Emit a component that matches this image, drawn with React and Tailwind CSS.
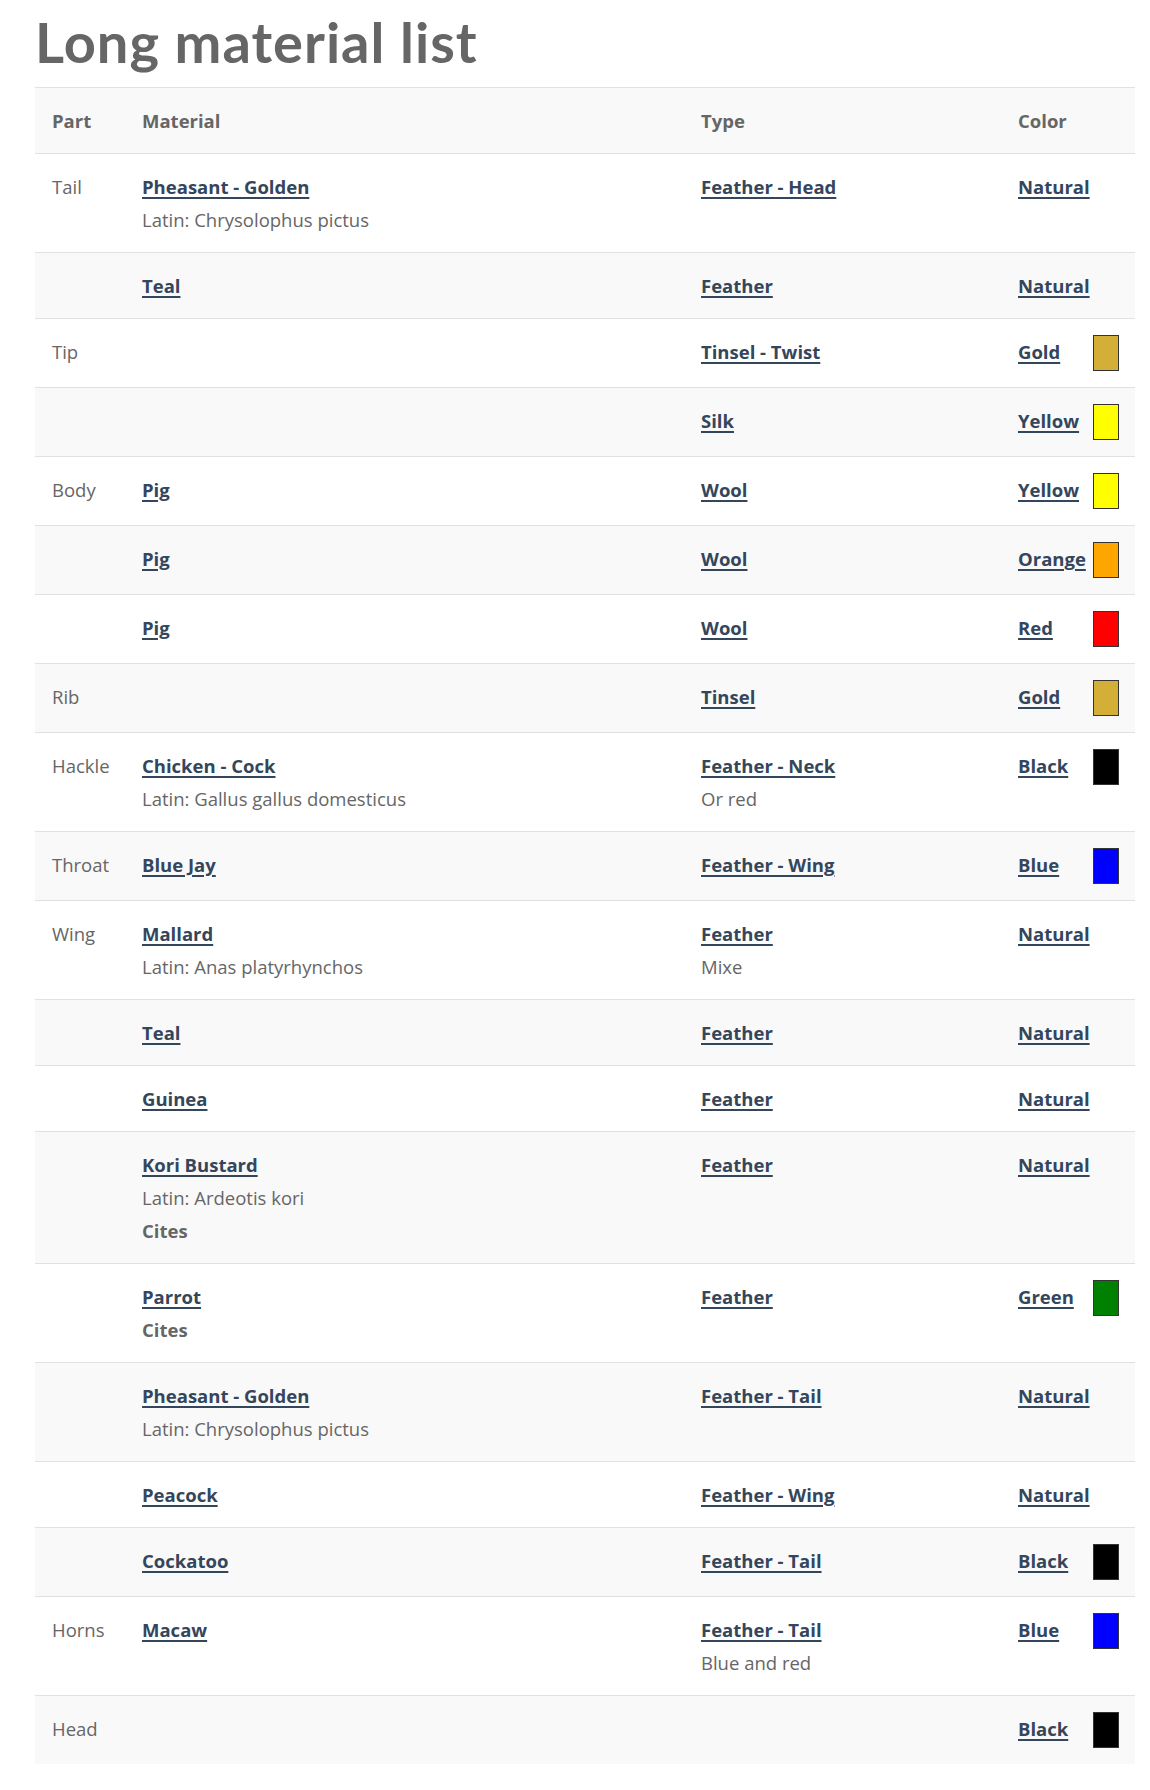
import React from 'react';

const rows = [
  { part: 'Tail', material: 'Pheasant - Golden', latin: 'Chrysolophus pictus', type: 'Feather - Head', color: 'Natural' },
  { material: 'Teal', type: 'Feather', color: 'Natural' },
  { part: 'Tip', type: 'Tinsel - Twist', color: 'Gold', swatch: 'bg-[#d4af37]' },
  { type: 'Silk', color: 'Yellow', swatch: 'bg-[#ffff00]' },
  { part: 'Body', material: 'Pig', type: 'Wool', color: 'Yellow', swatch: 'bg-[#ffff00]' },
  { material: 'Pig', type: 'Wool', color: 'Orange', swatch: 'bg-[#ffa500]' },
  { material: 'Pig', type: 'Wool', color: 'Red', swatch: 'bg-[#ff0000]' },
  { part: 'Rib', type: 'Tinsel', color: 'Gold', swatch: 'bg-[#d4af37]' },
  { part: 'Hackle', material: 'Chicken - Cock', latin: 'Gallus gallus domesticus', type: 'Feather - Neck', note: 'Or red', color: 'Black', swatch: 'bg-[#000000]' },
  { part: 'Throat', material: 'Blue Jay', type: 'Feather - Wing', color: 'Blue', swatch: 'bg-[#0000ff]' },
  { part: 'Wing', material: 'Mallard', latin: 'Anas platyrhynchos', type: 'Feather', note: 'Mixe', color: 'Natural' },
  { material: 'Teal', type: 'Feather', color: 'Natural' },
  { material: 'Guinea', type: 'Feather', color: 'Natural' },
  { material: 'Kori Bustard', latin: 'Ardeotis kori', cites: true, type: 'Feather', color: 'Natural' },
  { material: 'Parrot', cites: true, type: 'Feather', color: 'Green', swatch: 'bg-[#008000]' },
  { material: 'Pheasant - Golden', latin: 'Chrysolophus pictus', type: 'Feather - Tail', color: 'Natural' },
  { material: 'Peacock', type: 'Feather - Wing', color: 'Natural' },
  { material: 'Cockatoo', type: 'Feather - Tail', color: 'Black', swatch: 'bg-[#000000]' },
  { part: 'Horns', material: 'Macaw', type: 'Feather - Tail', note: 'Blue and red', color: 'Blue', swatch: 'bg-[#0000ff]' },
  { part: 'Head', color: 'Black', swatch: 'bg-[#000000]' },
];

const Link = ({ children }) => (
  <a href="#" className="font-bold text-[#34465c] underline decoration-[1.5px] underline-offset-[3px]">
    {children}
  </a>
);

const cell = 'align-top pl-[17px] pr-4 pt-4 pb-4';

export default function App() {
  return (
    <div className="bg-white min-h-[1790px] pl-[35px] pr-[15px] font-['Open_Sans',sans-serif] text-[18.5px] leading-[33px] text-[#666666]">
      <h1 className="pt-[8px] mb-[12px] font-['Lato',sans-serif] font-bold text-[56px] leading-[1.2] tracking-[1px] text-[#666666]">
        Long material list
      </h1>

      {/* Material table */}
      <table className="w-[1100px] table-fixed border-collapse border-t border-[#e1e1e1]">
        <colgroup>
          <col className="w-[90px]" />
          <col className="w-[559px]" />
          <col className="w-[317px]" />
          <col className="w-[134px]" />
        </colgroup>
        <thead>
          <tr className="bg-[#f9f9f9] text-left">
            <th className={cell + ' font-bold'}>Part</th>
            <th className={cell + ' font-bold'}>Material</th>
            <th className={cell + ' font-bold'}>Type</th>
            <th className={cell + ' font-bold'}>Color</th>
          </tr>
        </thead>
        <tbody>
          {rows.map((r, i) => (
            <tr key={i} className={'border-t border-[#e1e1e1] ' + (i % 2 === 1 ? 'bg-[#f9f9f9]' : 'bg-white')}>
              <td className={cell}>{r.part}</td>
              <td className={cell}>
                {r.material && <div><Link>{r.material}</Link></div>}
                {r.latin && <div>Latin: {r.latin}</div>}
                {r.cites && <div className="font-bold">Cites</div>}
              </td>
              <td className={cell}>
                {r.type && <div><Link>{r.type}</Link></div>}
                {r.note && <div>{r.note}</div>}
              </td>
              <td className={cell}>
                <div className="flex justify-between items-start">
                  <Link>{r.color}</Link>
                  {r.swatch && <div className={'w-[26px] h-[36px] border border-[#333333] ' + r.swatch}></div>}
                </div>
              </td>
            </tr>
          ))}
        </tbody>
      </table>
    </div>
  );
}
